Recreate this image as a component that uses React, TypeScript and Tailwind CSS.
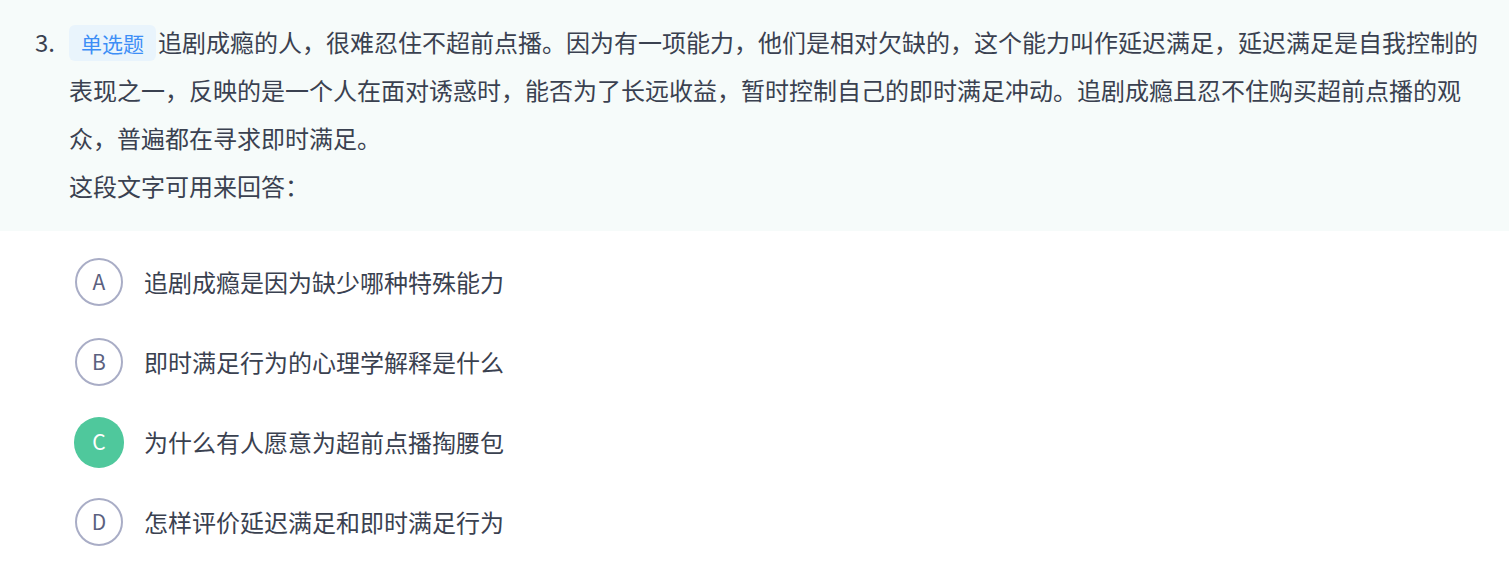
const options = [
  { key: 'A', text: '追剧成瘾是因为缺少哪种特殊能力' },
  { key: 'B', text: '即时满足行为的心理学解释是什么' },
  { key: 'C', text: '为什么有人愿意为超前点播掏腰包' },
  { key: 'D', text: '怎样评价延迟满足和即时满足行为' },
];

const selected = 'C';

export default function App() {
  return (
    <div
      className="w-full min-h-screen bg-white text-[#3a4150]"
      style={{ fontFamily: '"Noto Sans CJK SC", "Noto Sans", sans-serif' }}
    >
      <div className="bg-[#f6fbfa] pl-[35px] pr-[27px] pt-[18px] pb-[21px] flex">
        <div className="w-[34px] shrink-0 text-[24px] leading-[48px]">3.</div>
        <div className="text-[24px] leading-[48px]">
          <p>
            <span className="inline-flex items-center justify-center align-middle h-[36px] px-[12px] mr-[2px] rounded-[6px] bg-[#e9f4fc] text-[#3d8ef6] text-[21px] -mt-[4px]">
              单选题
            </span>
            追剧成瘾的人，很难忍住不超前点播。因为有一项能力，他们是相对欠缺的，这个能力叫作延迟满足，延迟满足是自我控制的表现之一，反映的是一个人在面对诱惑时，能否为了长远收益，暂时控制自己的即时满足冲动。追剧成瘾且忍不住购买超前点播的观众，普遍都在寻求即时满足。
          </p>
          <p>这段文字可用来回答：</p>
        </div>
      </div>

      <div className="pl-[74px] pt-[11px] flex flex-col">
        {options.map((o) => {
          const on = o.key === selected;
          return (
            <div key={o.key} className="flex items-center h-[80px] cursor-pointer">
              <div className="w-[50px] flex justify-center shrink-0">
                {on ? (
                  <div className="w-[51px] h-[51px] rounded-full bg-[#4fc89c] text-white flex items-center justify-center text-[21px]">
                    {o.key}
                  </div>
                ) : (
                  <div className="w-[48px] h-[48px] rounded-full border-2 border-[#a9adc6] text-[#5b6180] flex items-center justify-center text-[21px]">
                    {o.key}
                  </div>
                )}
              </div>
              <div className="ml-[20px] text-[24px] leading-[48px]">{o.text}</div>
            </div>
          );
        })}
      </div>
    </div>
  );
}
